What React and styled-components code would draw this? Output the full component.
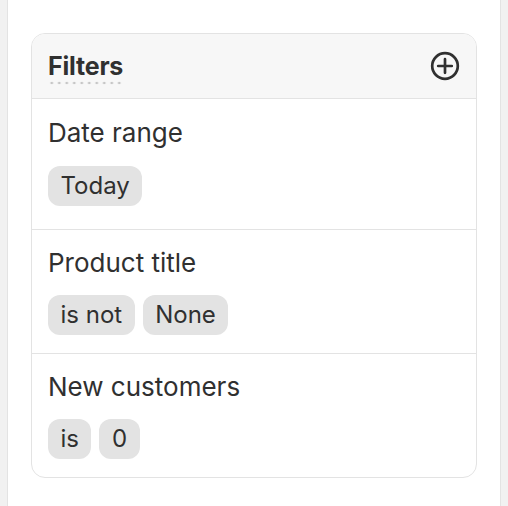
import React from 'react';
import styled, { createGlobalStyle } from 'styled-components';

const GlobalStyle = createGlobalStyle`
  html, body {
    margin: 0;
    padding: 0;
    background: #f1f1f1;
    font-family: Inter, "Noto Sans", "Liberation Sans", sans-serif;
    color: #303030;
  }
  * { box-sizing: border-box; }
`;

const Panel = styled.div`
  margin-left: 7px;
  width: 494px;
  min-height: 100vh;
  background: #ffffff;
  border-left: 1px solid #e3e3e3;
  border-right: 1px solid #e3e3e3;
  padding: 33px 23px;
`;

const Card = styled.div`
  border: 1px solid #e3e3e3;
  border-radius: 14px;
  overflow: hidden;
  background: #ffffff;
`;

const Header = styled.div`
  display: flex;
  align-items: center;
  justify-content: space-between;
  height: 65px;
  padding: 0 16px;
  background: #f7f7f7;
  border-bottom: 1px solid #e3e3e3;
`;

const Title = styled.span`
  font-size: 25px;
  font-weight: 650;
  line-height: 64px;
  letter-spacing: -0.2px;
  background-image: radial-gradient(circle, #c6c6c6 1.3px, transparent 1.6px);
  background-size: 7.5px 4px;
  background-repeat: repeat-x;
  background-position: 0 47px;
`;

const AddButton = styled.button`
  display: flex;
  align-items: center;
  justify-content: center;
  width: 30px;
  height: 30px;
  padding: 0;
  border: none;
  background: transparent;
  color: #303030;
  cursor: pointer;
`;

const Section = styled.div`
  display: flex;
  flex-direction: column;
  align-items: flex-start;
  gap: 16.5px;
  padding: ${(p) => (p.$first ? '18px 16px 23.5px' : '16.5px 16px 18px')};
  border-top: ${(p) => (p.$first ? 'none' : '1px solid #e3e3e3')};
`;

const Label = styled.div`
  font-size: 26px;
  line-height: 32px;
  font-weight: 400;
`;

const Chips = styled.div`
  display: flex;
  gap: 8px;
`;

const Chip = styled.span`
  display: inline-flex;
  align-items: center;
  height: 40px;
  padding: 0 12.5px;
  border-radius: 12px;
  background: #e3e3e3;
  font-size: 24px;
  line-height: 1;
  color: #303030;
`;

const filters = [
  { label: 'Date range', chips: ['Today'] },
  { label: 'Product title', chips: ['is not', 'None'] },
  { label: 'New customers', chips: ['is', '0'] },
];

function PlusCircle() {
  return (
    <svg width="30" height="30" viewBox="0 0 30 30" fill="none">
      <circle cx="15" cy="15" r="12.8" stroke="currentColor" strokeWidth="2.7" />
      <path d="M15 8.2v13.6M8.2 15h13.6" stroke="currentColor" strokeWidth="2.7" strokeLinecap="round" />
    </svg>
  );
}

export default function App() {
  return (
    <>
      <GlobalStyle />
      <Panel>
        <Card>
          <Header>
            <Title>Filters</Title>
            <AddButton aria-label="Add filter">
              <PlusCircle />
            </AddButton>
          </Header>
          {filters.map((f, i) => (
            <Section key={f.label} $first={i === 0}>
              <Label>{f.label}</Label>
              <Chips>
                {f.chips.map((c) => (
                  <Chip key={c}>{c}</Chip>
                ))}
              </Chips>
            </Section>
          ))}
        </Card>
      </Panel>
    </>
  );
}
